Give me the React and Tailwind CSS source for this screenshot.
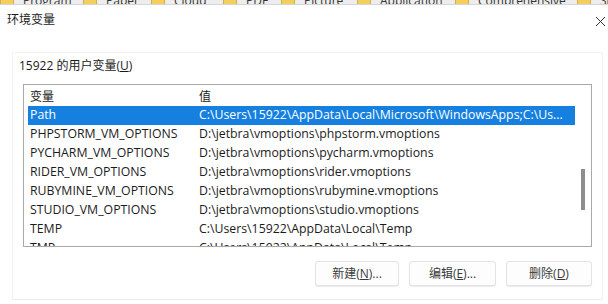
import React from "react";

const folders = [
  { name: "Program", x: 0 },
  { name: "Paper", x: 83 },
  { name: "Cloud", x: 151 },
  { name: "PDF", x: 223 },
  { name: "Picture", x: 281 },
  { name: "Application", x: 357 },
  { name: "Comprehensive", x: 455 },
  { name: "Sh", x: 577 },
];

const rows = [
  { name: "Path", value: "C:\\Users\\15922\\AppData\\Local\\Microsoft\\WindowsApps;C:\\Us..." },
  { name: "PHPSTORM_VM_OPTIONS", value: "D:\\jetbra\\vmoptions\\phpstorm.vmoptions" },
  { name: "PYCHARM_VM_OPTIONS", value: "D:\\jetbra\\vmoptions\\pycharm.vmoptions" },
  { name: "RIDER_VM_OPTIONS", value: "D:\\jetbra\\vmoptions\\rider.vmoptions" },
  { name: "RUBYMINE_VM_OPTIONS", value: "D:\\jetbra\\vmoptions\\rubymine.vmoptions" },
  { name: "STUDIO_VM_OPTIONS", value: "D:\\jetbra\\vmoptions\\studio.vmoptions" },
  { name: "TEMP", value: "C:\\Users\\15922\\AppData\\Local\\Temp" },
  { name: "TMP", value: "C:\\Users\\15922\\AppData\\Local\\Temp" },
];

const FolderIcon = () => (
  <svg width="14" height="12" viewBox="0 0 14 12" className="shrink-0">
    <path d="M0.5 2 h5 l1.5 1.5 h6.5 v8 h-13 z" fill="#f4cf5e" stroke="#c9a23a" strokeWidth="0.8" />
  </svg>
);

const Btn = ({ label, hot, tail, w }) => (
  <button
    className={`${w} h-[25px] flex items-center justify-center bg-[#fdfdfd] border border-[#e3e3e3] rounded-[3px] shadow-[0_1px_1px_rgba(0,0,0,0.08)] text-[12px] text-[#3a3a3a]`}
  >
    {label}(<span className="underline">{hot}</span>){tail}
  </button>
);

export default function App() {
  return (
    <div className="w-[608px] h-[304px] bg-white overflow-hidden flex flex-col font-['Open_Sans','Noto_Sans_CJK_SC',sans-serif] text-[#1b1b1b]">
      {/* Explorer bookmarks strip, cut off */}
      <div className="h-[5px] shrink-0 bg-[#ededed] border-b border-[#d6d6d6] relative overflow-hidden">
        {folders.map((f) => (
          <div
            key={f.name}
            className="absolute top-[-8px] flex items-center gap-[9px] text-[12px] text-[#333]"
            style={{ left: f.x }}
          >
            <FolderIcon />
            <span>{f.name}</span>
          </div>
        ))}
      </div>

      {/* Title bar */}
      <div className="h-[28px] shrink-0 flex items-center justify-between pl-[7px] pr-[2px]">
        <span className="text-[12px] font-['Noto_Sans_CJK_SC',sans-serif]">环境变量</span>
        <svg width="11" height="11" viewBox="0 0 11 11" className="mt-[4px]">
          <path d="M1 1 L10 10 M10 1 L1 10" stroke="#333" strokeWidth="1" />
        </svg>
      </div>

      {/* User variables group */}
      <div className="mt-[19px] ml-[12px] mr-[5px] h-[248px] border border-[#f2f2f2] border-b-[#ececec] pt-[4px] px-[10px] flex flex-col">
        <div className="text-[12px] h-[18px] flex items-center ml-[-4px]">
          15922 的用户变量(<span className="underline">U</span>)
        </div>

        <div className="mt-[9px] h-[163px] border border-[#a9a9a9] relative overflow-hidden text-[12.3px]">
          <div className="h-[21px] flex items-center pl-[6px]">
            <span className="w-[169px] font-['Noto_Sans_CJK_SC',sans-serif] text-[12px]">变量</span>
            <span className="font-['Noto_Sans_CJK_SC',sans-serif] text-[12px]">值</span>
          </div>
          <div className="pl-[4px] pr-[16px]">
            {rows.map((r, i) => (
              <div
                key={r.name}
                className={`h-[19px] flex items-center pl-[2px] whitespace-nowrap ${
                  i === 0 ? "bg-[#1680e0] text-white" : ""
                }`}
              >
                <span className="w-[169px] shrink-0">{r.name}</span>
                <span>{r.value}</span>
              </div>
            ))}
          </div>
          {/* scrollbar thumb */}
          <div className="absolute right-[6px] top-[84px] w-[4px] h-[41px] bg-[#8d8d8d]" />
        </div>

        <div className="mt-[14px] flex justify-end gap-[10px]">
          <Btn label="新建" hot="N" tail="..." w="w-[84px]" />
          <Btn label="编辑" hot="E" tail="..." w="w-[87px]" />
          <Btn label="删除" hot="D" tail="" w="w-[86px]" />
        </div>
      </div>
    </div>
  );
}
